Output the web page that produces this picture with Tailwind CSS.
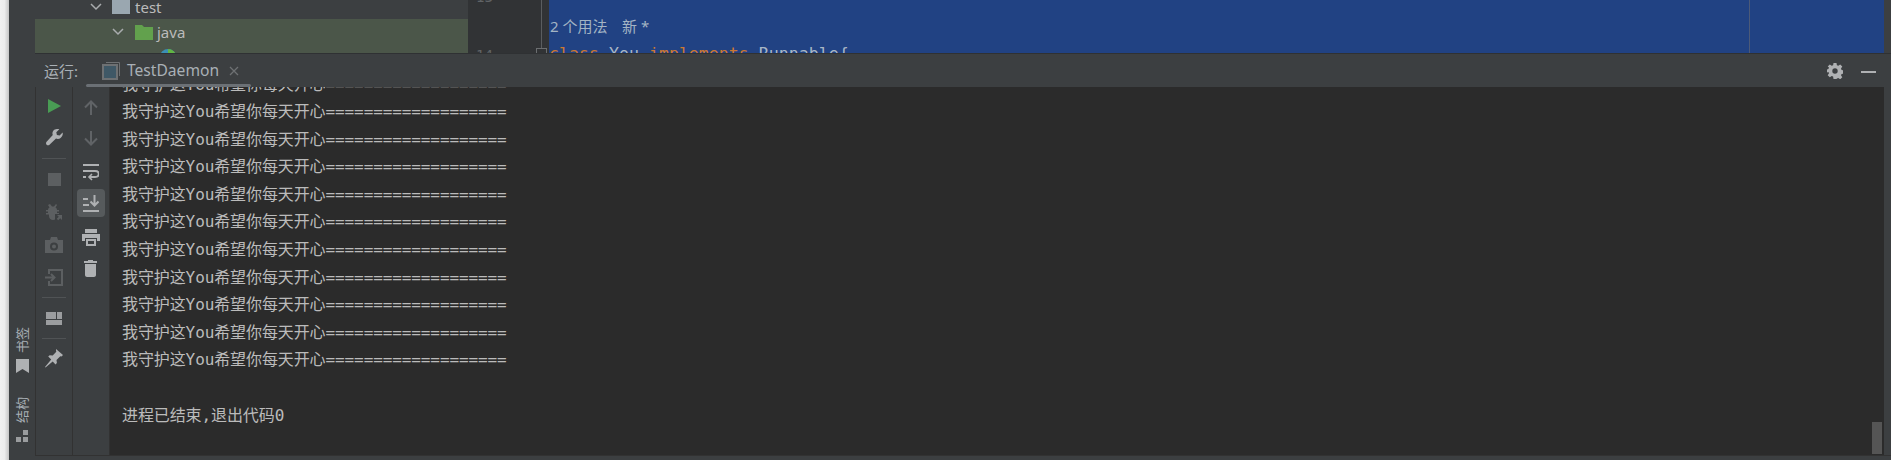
<!DOCTYPE html>
<html lang="zh-CN">
<head>
<meta charset="UTF-8">
<title>TestDaemon</title>
<script src="https://cdn.jsdelivr.net/npm/@tailwindcss/browser@4"></script>
</head>
<body class="overflow-hidden bg-[#f0f0f0]">
<div class="flex h-[460px] w-[1891px] overflow-hidden font-['Noto_Sans','Noto_Sans_CJK_SC',sans-serif]">
  <!-- window edge -->
  <div class="w-[9px] shrink-0 bg-gradient-to-r from-[#f0f0f0] via-[#ececec] to-[#c4c4c4]"></div>

  <!-- left tool strip -->
  <div class="flex w-[26px] shrink-0 flex-col items-center bg-[#3c3f41] pt-[327px] text-[#a9b0b6]">
    <span class="h-[26px] text-[13px] leading-[13px] [writing-mode:vertical-rl] [text-orientation:sideways] rotate-180">书签</span>
    <svg class="mt-[6px]" width="13" height="14" viewBox="0 0 13 14"><path d="M0 0h13v14L6.500 10 0 14z" fill="#afb1b3"/></svg>
    <span class="mt-[24px] h-[26px] text-[13px] leading-[13px] [writing-mode:vertical-rl] [text-orientation:sideways] rotate-180">结构</span>
    <svg class="mt-[7px]" width="13" height="12" viewBox="0 0 13 12" fill="#9a9c9e"><rect x="7" y="0" width="5" height="5"/><rect x="0" y="7" width="5" height="5"/><rect x="7" y="7" width="5" height="5"/></svg>
  </div>

  <div class="flex min-w-0 flex-1 flex-col">
    <!-- top: project tree and editor -->
    <div class="flex h-[53px] shrink-0 overflow-hidden">
      <div class="w-[433px] shrink-0 bg-[#3c3f41] text-[15px] text-[#bbbbbb]">
        <div class="flex h-[19px] items-center pb-[5px]">
          <svg class="ml-[55px]" width="12" height="8" viewBox="0 0 12 8" fill="none" stroke="#a9acae" stroke-width="1.500"><path d="M1 1l5 5 5-5"/></svg>
          <svg class="ml-[10px]" width="18" height="14" viewBox="0 0 18 14"><path d="M0 -6h7l2 2h9v18H0z" fill="#9aa7b0"/></svg>
          <span class="ml-[5px] leading-none">test</span>
        </div>
        <div class="h-[34px] overflow-hidden bg-[#4b5649]">
          <div class="flex h-[26px] items-center">
            <svg class="ml-[77px]" width="12" height="8" viewBox="0 0 12 8" fill="none" stroke="#a9acae" stroke-width="1.500"><path d="M1 1l5 5 5-5"/></svg>
            <svg class="ml-[11px]" width="18" height="15" viewBox="0 0 18 15"><path d="M0 0h7l2 2h9v13H0z" fill="#62a14d"/></svg>
            <span class="ml-[4px] leading-none">java</span>
          </div>
          <div class="flex pt-[3px]">
            <svg class="ml-[124px]" width="18" height="18" viewBox="0 0 18 18"><circle cx="9" cy="9" r="8" fill="#3b8fb5"/><path d="M9 1a8 8 0 0 1 8 8H9z" fill="#62b543"/></svg>
          </div>
        </div>
      </div>
      <div class="relative flex w-[81px] shrink-0 bg-[#313335] font-['DejaVu_Sans_Mono',monospace] text-[14px] text-[#606366]">
        <span class="absolute left-[8px] top-[-12px] leading-[18px]">13</span>
        <span class="absolute left-[8px] top-[46px] leading-[18px]">14</span>
        <div class="absolute left-[73px] top-0 h-[48px] w-px bg-[#5a5d5f]"></div>
        <div class="absolute left-[68px] top-[48px] h-[11px] w-[11px] border border-[#6b6e70]"></div>
      </div>
      <div class="relative min-w-0 flex-1 bg-[#214283]">
        <div class="flex h-[37px] items-end text-[15px] leading-[22px] text-[#a3b4c4]">
          <span class="ml-px whitespace-pre">2 个用法</span><span class="ml-[14.500px] whitespace-pre">新 *</span>
        </div>
        <div class="whitespace-pre pt-[6px] font-['DejaVu_Sans_Mono',monospace] text-[16.600px] leading-[22px] text-[#a9b7c6]"><span class="text-[#cc7832]">class</span> You <span class="text-[#cc7832]">implements</span> Runnable{</div>
        <div class="absolute left-[1200px] top-0 h-full w-px bg-[#4c5a78]"></div>
      </div>
      <div class="w-[7px] shrink-0 bg-[#3c3f41]"></div>
    </div>

    <!-- run panel header -->
    <div class="relative flex h-[34px] shrink-0 items-center border-t border-[#2f3133] bg-[#3c3f41] pt-px text-[#a9b0b6]">
      <span class="ml-[9px] w-[58px] text-[15px]">运行:</span>
      <svg width="18" height="18" viewBox="0 0 18 18"><path d="M4 .5h13.500V14" fill="none" stroke="#6e7173" stroke-width="1"/><rect x="1" y="3" width="14" height="14" fill="#3f5866" stroke="#6e7173" stroke-width="2"/></svg>
      <span class="ml-[7px] text-[15.600px]">TestDaemon</span>
      <svg class="ml-[10px]" width="10" height="10" viewBox="0 0 10 10" stroke="#6e7173" stroke-width="1.300"><path d="M1 1l8 8M9 1l-8 8"/></svg>
      <div class="absolute bottom-0 left-[51px] h-[3px] w-[165px] rounded-full bg-[#6b7075]"></div>
      <svg class="absolute left-[1792px] top-[9px]" width="16" height="16" viewBox="0 0 16 16"><path fill="#afb1b3" fill-rule="evenodd" d="M6.500 0h3l.4 2.200 1.400.6L13.200 1.500l2.100 2.100-1.300 1.900.6 1.400 2.400.6v3l-2.400.4-.6 1.400 1.300 1.900-2.100 2.100-1.900-1.300-1.400.6L9.500 16h-3l-.4-2.400-1.400-.6-1.900 1.300L.7 12.200 2 10.300l-.6-1.400L0 9.500v-3l1.400-.6.600-1.400L.7 3.600l2.100-2.100 1.900 1.300 1.400-.6zM8 5.300a2.700 2.700 0 1 0 0 5.400 2.700 2.700 0 0 0 0-5.400z"/></svg>
      <div class="absolute left-[1826px] top-[17px] h-[2px] w-[15px] bg-[#afb1b3]"></div>
      <div class="absolute right-0 top-0 h-full w-[7px] bg-[#3c3f41]"></div>
    </div>

    <!-- run panel body -->
    <div class="flex min-h-0 flex-1">
      <div class="flex w-[37px] shrink-0 flex-col items-center border-l border-[#323232] bg-[#3c3f41] pt-[12px]">
        <svg width="13" height="14" viewBox="0 0 13 14"><path d="M0 0l13 7-13 7z" fill="#499c54"/></svg>
        <svg class="mt-[16px]" width="17" height="17" viewBox="0 0 17 17"><path fill="#afb1b3" d="M16.600 3.600l-3 3-2.700-.6-.6-2.700 3-3C11 -.4 8.500.1 7.300 1.700c-1 1.300-1.100 3-.5 4.300L.6 12.800c-.8.800-.8 2 0 2.900.8.800 2 .8 2.900 0L10 9.500c1.500.7 3.300.5 4.600-.6 1.600-1.300 2.600-3.300 2-5.300z"/></svg>
        <div class="mt-[12px] h-px w-[24px] bg-[#505355]"></div>
        <div class="mt-[14px] h-[13px] w-[13px] bg-[#5c5f61]"></div>
        <svg class="mt-[18px]" width="18" height="18" viewBox="0 0 18 18" fill="#5c5f61"><path d="M5 0l2 2.500h2L11 0l1 1-1.500 2.500c1 .6 1.500 1.500 1.500 2.500h2v1.500h-2V9h2v1.500h-2V12c0 2.500-2 4-4 4s-4-1.500-4-4v-1.500H1V9h2V7.500H1V6h2c0-1 .5-1.900 1.500-2.500L3 1z"/><path d="M10 10h8v8h-8z" fill="#3c3f41"/><path d="M12 11h5v5l-1.800-1.800-2 2-1.400-1.400 2-2z"/></svg>
        <svg class="mt-[15px]" width="18" height="16" viewBox="0 0 18 16"><path fill-rule="evenodd" fill="#5c5f61" d="M0 3h5l1-3h6l1 3h5v13H0zM9 5.500a4 4 0 1 0 0 8 4 4 0 0 0 0-8zm0 2a2 2 0 1 1 0 4 2 2 0 0 1 0-4z"/></svg>
        <svg class="mt-[16px]" width="18" height="17" viewBox="0 0 18 17" fill="none" stroke="#5c5f61" stroke-width="2"><path d="M4 5V1h13v15H4v-4"/><path d="M0 8.500h9M6 5l3.500 3.500L6 12"/></svg>
        <div class="mt-[11px] h-px w-[24px] bg-[#505355]"></div>
        <svg class="mt-[14px]" width="16" height="13" viewBox="0 0 16 13" fill="#9b9d9f"><rect width="10" height="7"/><rect x="11" width="5" height="7"/><rect y="8" width="16" height="5"/></svg>
        <div class="mt-[13px] h-px w-[24px] bg-[#505355]"></div>
        <svg class="mt-[10px]" width="18" height="19" viewBox="0 0 18 19"><path fill="#afb1b3" d="M11 0l7 6-1.500 1.500-1.200-.3-3.800 3.800.4 3-1.400 1.400-2.800-3L.5 18.500l-.5-.5 6.200-7.500-3-2.900 1.500-1.400 3 .4 3.600-3.800-.3-1.300z"/></svg>
      </div>
      <div class="flex w-[37px] shrink-0 flex-col items-center border-l border-[#323232] bg-[#3c3f41] pr-px pt-[13px]">
        <svg width="14" height="15" viewBox="0 0 14 15" fill="none" stroke="#606366" stroke-width="2"><path d="M7 15V2M1 7.500L7 1.500l6 6"/></svg>
        <svg class="mt-[16px]" width="14" height="15" viewBox="0 0 14 15" fill="none" stroke="#606366" stroke-width="2"><path d="M7 0v13M1 7.500l6 6 6-6"/></svg>
        <svg class="mt-[18px]" width="16" height="18" viewBox="0 0 16 18" fill="none" stroke="#afb1b3" stroke-width="2"><path d="M0 1h16M0 7h12c5 0 5 6 0 6H7"/><path d="M9 10l-3 3 3 3" stroke-width="1.600"/><path d="M0 13h3"/></svg>
        <div class="mt-[7px] flex h-[28px] w-[28px] items-center justify-center rounded-[4px] bg-[#565a5c]">
          <svg width="16" height="17" viewBox="0 0 16 17" fill="none" stroke="#afb1b3" stroke-width="2"><path d="M0 16h16M0 10h6M0 4h5"/><path d="M11.500 0v10M7.500 6.500l4 4 4-4"/></svg>
        </div>
        <svg class="mt-[12px]" width="18" height="17" viewBox="0 0 18 17" fill="#afb1b3"><rect x="3" width="12" height="4"/><path d="M0 5h18v7h-3V9H3v3H0z"/><path d="M4 10h10v7H4zm2 2v3h6v-3z" fill-rule="evenodd"/></svg>
        <svg class="mt-[14px]" width="13" height="17" viewBox="0 0 13 17" fill="#afb1b3"><path d="M4 0h5v1h4v2H0V1h4zM1 4h11v11c0 1-1 2-2 2H3c-1 0-2-1-2-2z"/></svg>
      </div>
      <!-- console output -->
      <div class="min-w-0 flex-1 overflow-hidden border-l border-[#323232] bg-[#2b2b2b] pl-[12px]">
        <div class="-mt-[16.500px] whitespace-pre font-['DejaVu_Sans_Mono','Noto_Sans_CJK_SC',monospace] text-[16px] leading-[27.600px] tracking-[-0.100px] text-[#bbbbbb]">我守护这You希望你每天开心===================
我守护这You希望你每天开心===================
我守护这You希望你每天开心===================
我守护这You希望你每天开心===================
我守护这You希望你每天开心===================
我守护这You希望你每天开心===================
我守护这You希望你每天开心===================
我守护这You希望你每天开心===================
我守护这You希望你每天开心===================
我守护这You希望你每天开心===================
我守护这You希望你每天开心===================

进程已结束,退出代码0</div>
      </div>
      <div class="w-[12px] shrink-0 bg-[#2b2b2b]">
        <div class="mt-[335px] h-[32px] w-[10px] bg-[#555555]"></div>
      </div>
      <div class="w-[7px] shrink-0 bg-[#3c3f41]"></div>
    </div>
    <div class="h-[5px] shrink-0 border-t border-[#323232] bg-[#3c3f41]"></div>
  </div>
</div>
</body>
</html>
